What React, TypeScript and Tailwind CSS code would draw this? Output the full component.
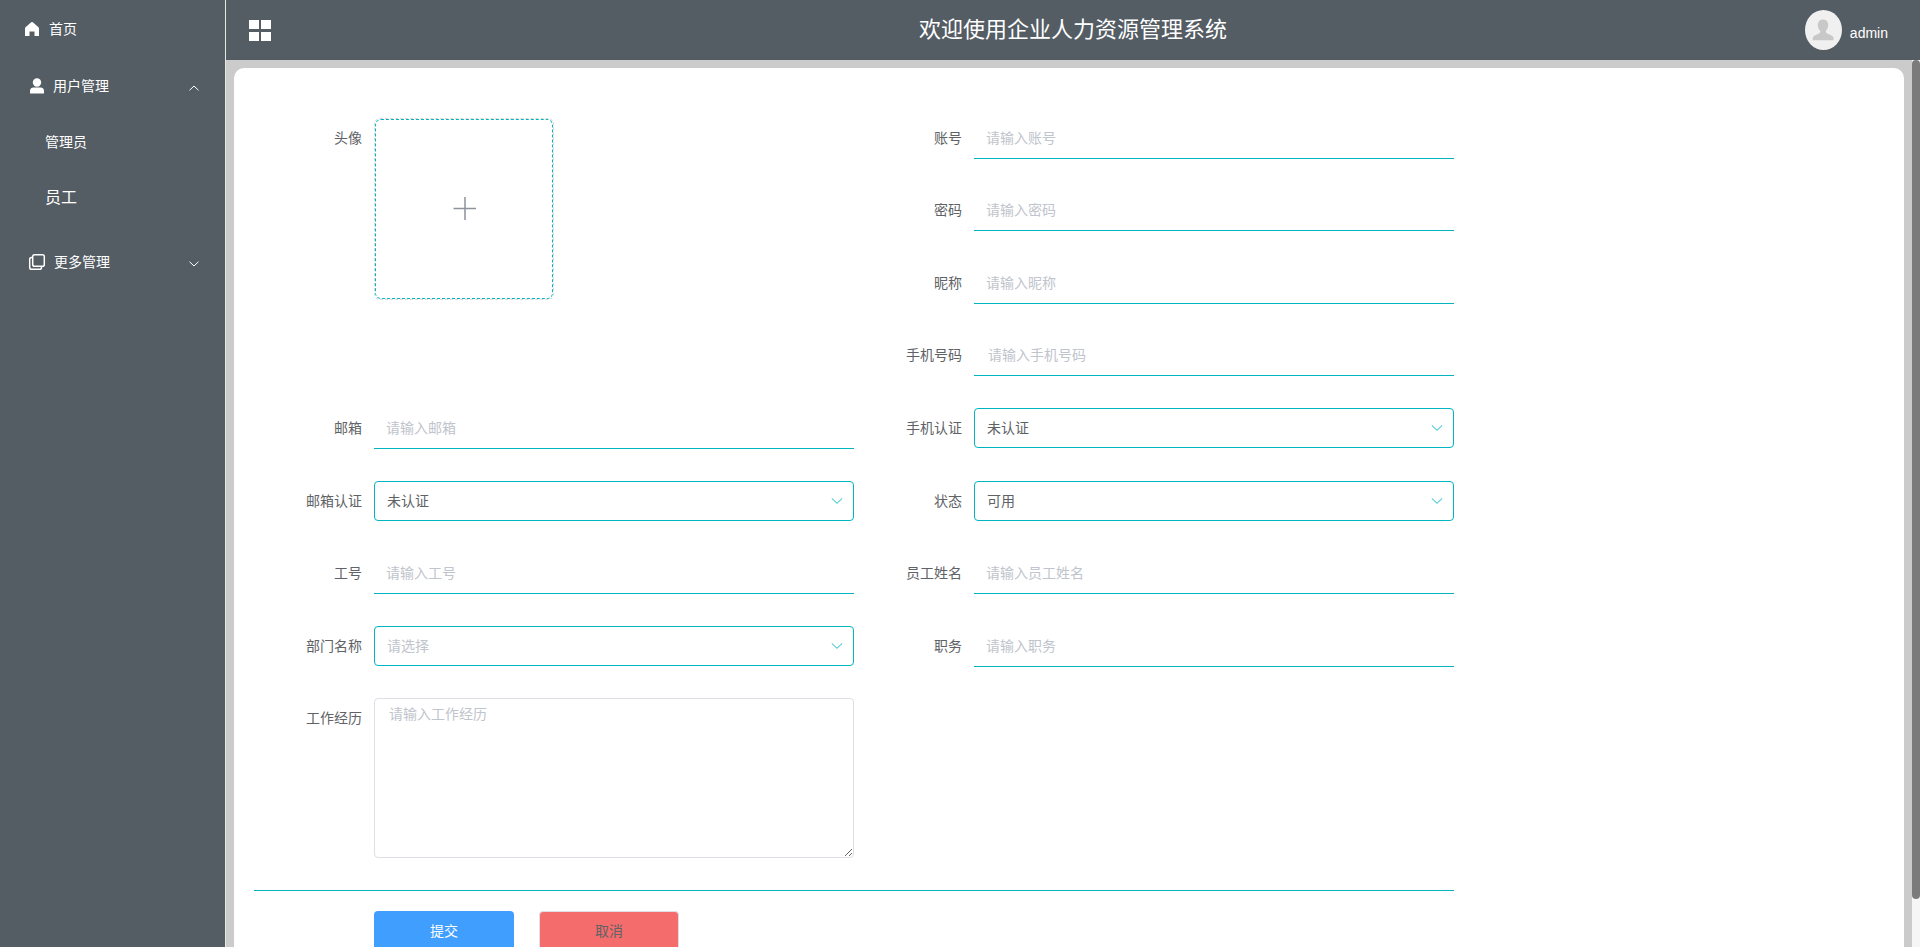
import { useState } from 'react'

const underlineClass =
  'block h-[41px] w-full border-b border-[#00b4c0] bg-transparent px-3 text-sm text-[#606266] outline-none placeholder:text-[#c0c4cc]'

interface FieldProps {
  id: string
  label: string
  className?: string
  children: React.ReactNode
}

function Field({ id, label, className = '', children }: FieldProps) {
  return (
    <div className={`flex items-start ${className}`}>
      <label htmlFor={id} className="w-[120px] shrink-0 pr-3 text-right leading-10 text-[#606266]">
        {label}
      </label>
      <div className="min-w-0 flex-1">{children}</div>
    </div>
  )
}

function TextField({ id, label, type = 'text' }: { id: string; label: string; type?: string }) {
  return (
    <Field id={id} label={label}>
      <input id={id} type={type} placeholder={`请输入${label}`} className={underlineClass} />
    </Field>
  )
}

function SelectField({ id, label, options, placeholder }: { id: string; label: string; options: string[]; placeholder?: string }) {
  const [value, setValue] = useState(placeholder ? '' : options[0])

  return (
    <Field id={id} label={label}>
      <div className="relative">
        <select
          id={id}
          value={value}
          onChange={(e) => setValue(e.target.value)}
          className={`block h-10 w-full appearance-none rounded border border-[#00b4c0] bg-white px-3 text-sm outline-none ${
            value ? 'text-[#606266]' : 'text-[#c0c4cc]'
          }`}
        >
          {placeholder && <option value="">{placeholder}</option>}
          {options.map((option) => (
            <option key={option}>{option}</option>
          ))}
        </select>
        <Chevron className="pointer-events-none absolute top-[13px] right-2.5 h-3.5 w-3.5 stroke-[0.8] text-[#00b4c0]" />
      </div>
    </Field>
  )
}

function Chevron({ className = '' }: { className?: string }) {
  return (
    <svg viewBox="0 0 12 12" fill="none" stroke="currentColor" strokeLinecap="round" className={className}>
      <path d="M1.800 4 6 8 10.200 4" />
    </svg>
  )
}

function HomeIcon() {
  return (
    <svg viewBox="0 0 16 16" fill="currentColor" className="h-4 w-4">
      <path d="M7.200 1.300a1.200 1.200 0 0 1 1.600 0l5.700 5a1.500 1.500 0 0 1 .5 1.100V15h-4.500v-4.500h-5V15H1V7.400a1.500 1.500 0 0 1 .5-1.100z" />
    </svg>
  )
}

function UserIcon() {
  return (
    <svg viewBox="0 0 16 16" fill="currentColor" className="h-4 w-4">
      <circle cx="8" cy="4.500" r="4.200" />
      <path d="M1 15.500v-2.500a3.500 3.500 0 0 1 3.500-3.500h7A3.500 3.500 0 0 1 15 13v2.500z" />
    </svg>
  )
}

function CopyIcon() {
  return (
    <svg viewBox="0 0 18 18" fill="none" stroke="currentColor" strokeWidth="1.500" className="h-[18px] w-[18px]">
      <rect x="4.700" y="1.700" width="11.600" height="11.600" rx="1.800" />
      <path d="M4.500 4.500H3.500a1.800 1.800 0 0 0-1.800 1.800v8.200a1.800 1.800 0 0 0 1.800 1.800h8.200a1.800 1.800 0 0 0 1.800-1.800v-1" />
    </svg>
  )
}

function Sidebar() {
  const [open, setOpen] = useState(true)

  return (
    <nav className="w-[226px] shrink-0 border-r border-[#e6e6e6] bg-[#545c64] text-white">
      <a href="#home" className="flex h-[58px] items-center gap-[9px] pl-6">
        <HomeIcon />
        首页
      </a>
      <button type="button" onClick={() => setOpen(!open)} className="flex h-14 w-full items-center gap-2 pr-[25px] pl-[29px]">
        <UserIcon />
        用户管理
        <Chevron className={`mt-1 ml-auto h-3 w-3 ${open ? 'rotate-180' : ''}`} />
      </button>
      {open && (
        <div className="flex flex-col pb-3">
          <a href="#admin" className="flex h-14 items-center pl-[45px]">
            管理员
          </a>
          <a href="#staff" className="flex h-14 items-center pl-[45px] text-base">
            员工
          </a>
        </div>
      )}
      <button type="button" className="flex h-12 w-full items-center gap-2 pr-[25px] pl-7">
        <CopyIcon />
        更多管理
        <Chevron className="mt-1 ml-auto h-3 w-3" />
      </button>
    </nav>
  )
}

function Header() {
  return (
    <header className="grid h-[60px] shrink-0 grid-cols-[1fr_auto_1fr] items-center bg-[#545c64] text-white">
      <div className="flex pl-[23px]">
        <button type="button" aria-label="菜单" className="grid w-[22px] grid-cols-2 gap-x-0.5 gap-y-[3px]">
          <span className="h-[9px] bg-white" />
          <span className="h-[9px] bg-white" />
          <span className="h-[9px] bg-white" />
          <span className="h-[9px] bg-white" />
        </button>
      </div>
      <h1 className="text-[22px]">欢迎使用企业人力资源管理系统</h1>
      <div className="flex items-center justify-end gap-2 pr-8">
        <svg viewBox="0 0 37 40" className="h-10 w-[37px]">
          <ellipse cx="18.500" cy="20" rx="18.500" ry="20" fill="#f0f0f0" />
          <path
            d="M18 9.500c3 0 5.200 2.200 5.200 5.500 0 2.500-1 4.500-2.400 5.700-.2 1.600.4 2.300 1.900 3 3.500 1.400 5.800 2.300 5.800 4.300v2.300H7.800V28c0-2 2.300-2.900 5.700-4.300 1.500-.7 2.100-1.400 1.700-3-1.400-1.200-2.400-3.200-2.400-5.700 0-3.300 2.200-5.500 5.200-5.500z"
            fill="#c8c8c8"
          />
        </svg>
        <span className="pt-1.5">admin</span>
      </div>
    </header>
  )
}

function UserForm() {
  return (
    <form className="max-w-[1200px]" onSubmit={(e) => e.preventDefault()}>
      <div className="grid grid-cols-2 grid-rows-[repeat(2,72px_73px)_repeat(2,73px_72px)_auto] border-b border-[#00b4c0] pb-8">
        <Field id="avatar" label="头像" className="row-span-4">
          <label
            htmlFor="avatar"
            className="block h-[182px] w-[180px] cursor-pointer rounded-md border border-dashed border-[#d9d9d9]"
          >
            <span className="flex h-full items-center justify-center rounded-md border border-dashed border-[#00b4c0]">
              <svg viewBox="0 0 24 24" stroke="#8c939d" strokeWidth="1.500" className="h-6 w-6">
                <path d="M13 0v23M1.500 11.500h23" />
              </svg>
            </span>
            <input id="avatar" type="file" className="sr-only" />
          </label>
        </Field>
        <TextField id="account" label="账号" />
        <TextField id="password" label="密码" type="password" />
        <TextField id="nickname" label="昵称" />
        <Field id="phone" label="手机号码">
          <input id="phone" type="tel" placeholder="请输入手机号码" className={`${underlineClass} pl-3.5`} />
        </Field>
        <TextField id="email" label="邮箱" />
        <SelectField id="phone-status" label="手机认证" options={['未认证', '已认证']} />
        <SelectField id="email-status" label="邮箱认证" options={['未认证', '已认证']} />
        <SelectField id="state" label="状态" options={['可用', '禁用']} />
        <TextField id="job-number" label="工号" />
        <TextField id="staff-name" label="员工姓名" />
        <SelectField id="department" label="部门名称" options={['人事部', '技术部']} placeholder="请选择" />
        <TextField id="position" label="职务" />
        <Field id="experience" label="工作经历">
          <textarea
            id="experience"
            placeholder="请输入工作经历"
            className="block h-40 w-full rounded border border-[#dcdfe6] px-3.5 py-[5px] text-sm text-[#606266] outline-none placeholder:text-[#c0c4cc]"
          />
        </Field>
      </div>
      <div className="flex gap-[25px] pt-5 pl-[120px]">
        <button type="submit" className="h-10 w-[140px] rounded bg-[#409eff] text-white">
          提交
        </button>
        <button type="button" className="h-10 w-[140px] rounded border border-[#dcdfe6] bg-[#f56c6c] text-[#606266]">
          取消
        </button>
      </div>
    </form>
  )
}

export default function App() {
  return (
    <div className="flex h-screen overflow-hidden font-['Liberation_Sans','Noto_Sans_CJK_SC',sans-serif] text-sm">
      <Sidebar />
      <div className="flex min-w-0 flex-1 flex-col">
        <Header />
        <div className="flex min-h-0 flex-1">
          <main className="min-w-0 flex-1 overflow-y-auto bg-[#cbcbcb] p-2 [scrollbar-width:none]">
            <div className="rounded-[10px] bg-white px-5 pt-[50px] pb-10">
              <UserForm />
            </div>
          </main>
          {/* scroll track */}
          <div className="w-2 shrink-0 bg-[#f6f6f6]">
            <div className="h-[94.6%] rounded bg-[#7b7b7b]" />
          </div>
        </div>
      </div>
    </div>
  )
}
